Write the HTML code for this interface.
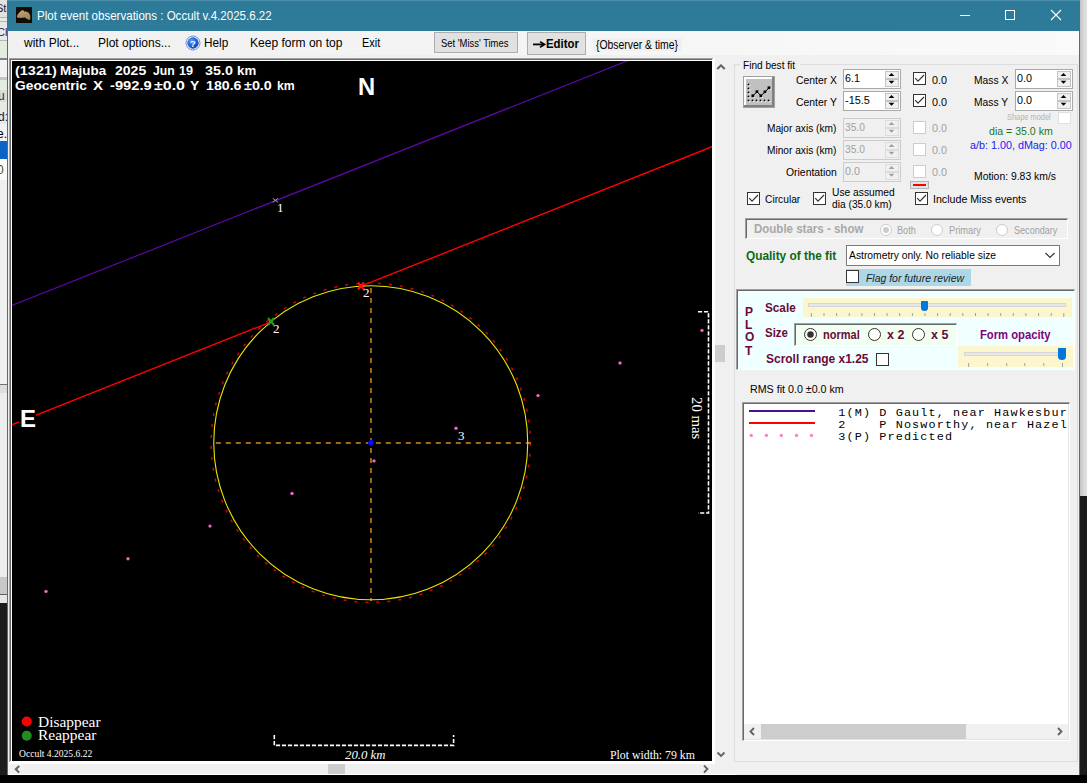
<!DOCTYPE html>
<html><head><meta charset="utf-8"><title>Plot event observations : Occult v.4.2025.6.22</title>
<style>
html,body{margin:0;padding:0;width:1087px;height:783px;overflow:hidden;background:#f0f0f0;font-family:"Liberation Sans",sans-serif}
.b{position:absolute;box-sizing:border-box}
.t{position:absolute;white-space:pre;transform-origin:0 0}
</style></head><body>
<div class="b" style="left:0px;top:0px;width:7px;height:17px;background:#e2e2e2"></div>
<div class="b" style="left:0px;top:17px;width:7px;height:1px;background:#b4b4b4"></div>
<div class="b" style="left:0px;top:18px;width:7px;height:3px;background:#e4eee0"></div>
<div class="b" style="left:0px;top:21px;width:7px;height:1px;background:#b4b4b4"></div>
<div class="b" style="left:0px;top:22px;width:7px;height:18px;background:#e8e8e8"></div>
<div class="b" style="left:0px;top:40px;width:7px;height:1px;background:#b4b4b4"></div>
<div class="b" style="left:0px;top:41px;width:7px;height:17px;background:#e2ede0"></div>
<div class="b" style="left:0px;top:58px;width:7px;height:2px;background:#808080"></div>
<div class="b" style="left:0px;top:60px;width:7px;height:17px;background:#f2f2f2"></div>
<div class="b" style="left:0px;top:77px;width:7px;height:3px;background:#c4c4c4"></div>
<div class="b" style="left:0px;top:80px;width:7px;height:10px;background:#e2ede0"></div>
<div class="b" style="left:0px;top:90px;width:7px;height:12px;background:#dcdcdc"></div>
<div class="b" style="left:0px;top:102px;width:7px;height:5px;background:#e2ede0"></div>
<div class="b" style="left:0px;top:107px;width:7px;height:17px;background:#e8e8e8"></div>
<div class="b" style="left:0px;top:124px;width:7px;height:17px;background:#f2f2f2"></div>
<div class="b" style="left:0px;top:141px;width:7px;height:18px;background:#0a64c8"></div>
<div class="b" style="left:0px;top:159px;width:7px;height:21px;background:#fafafa"></div>
<div class="b" style="left:0px;top:180px;width:7px;height:207px;background:#f0f0f0"></div>
<div class="b" style="left:0px;top:384px;width:7px;height:1px;background:#707078"></div>
<div class="b" style="left:0px;top:385px;width:7px;height:8px;background:#dcdcdc"></div>
<div class="b" style="left:0px;top:393px;width:7px;height:184px;background:#ededed"></div>
<div class="b" style="left:0px;top:577px;width:7px;height:17px;background:#c8c8c8"></div>
<div class="b" style="left:0px;top:594px;width:7px;height:1px;background:#606068"></div>
<div class="b" style="left:0px;top:595px;width:7px;height:8px;background:#e6e6e6"></div>
<div class="b" style="left:0px;top:603px;width:7px;height:180px;background:#1c1c1c"></div>
<div class="b" style="left:1080px;top:0px;width:7px;height:496px;background:linear-gradient(to right,#c2c2c2,#dcdcdc 60%,#e0e0e0)"></div>
<div class="b" style="left:1080px;top:496px;width:7px;height:287px;background:#1b1b1b"></div>
<div class="b" style="left:0px;top:775px;width:1087px;height:8px;background:#000"></div>
<div class="b" style="left:7px;top:0px;width:1073px;height:775px;background:#f0f0f0"></div>
<div class="b" style="left:7px;top:0px;width:1px;height:775px;background:#2d7b99"></div>
<div class="b" style="left:1079px;top:0px;width:1px;height:775px;background:#2d7b99"></div>
<div class="b" style="left:7px;top:0px;width:1073px;height:31px;background:#2d7b99"></div>
<div class="b" style="left:7px;top:0px;width:1073px;height:1px;background:#4a8fab"></div>
<svg class="b" style="left:16px;top:7px" width="16" height="16" viewBox="0 0 16 16"><rect width="16" height="16" fill="#100c06"/><defs><linearGradient id="ag" x1="0" y1="0" x2="0.3" y2="1"><stop offset="0" stop-color="#c8a878"/><stop offset="1" stop-color="#a08058"/></linearGradient></defs><path d="M0.9 9.5 C1.2 7 4 4.5 6.5 2.9 C7.5 3 8 4 8.6 4.7 C9.5 4.3 10.5 4.6 11.4 5.1 C13 5.5 14.5 8 14.4 10.2 C14.3 12 13.8 13 13 12.9 C11 12.5 10 11 8.8 10.6 C7 10.8 4.5 11 2.9 10.8 C1.5 10.7 0.9 10.3 0.9 9.5 Z" fill="url(#ag)"/></svg>
<div class="b" style="left:960px;top:15px;width:10px;height:1px;background:#fff"></div>
<div class="b" style="left:1005px;top:10px;width:10px;height:10px;border:1px solid #fff;box-sizing:border-box"></div>
<svg class="b" style="left:1050px;top:9px" width="12" height="12" viewBox="0 0 12 12"><path d="M1 1 L11 11 M11 1 L1 11" stroke="#fff" stroke-width="1.1"/></svg>
<div class="b" style="left:8px;top:31px;width:1071px;height:24px;background:linear-gradient(to right,#f0f0f0,#fafafa)"></div>
<svg class="b" style="left:185px;top:35px" width="16" height="16" viewBox="0 0 16 16"><defs><radialGradient id="hg" cx="0.35" cy="0.3" r="0.75"><stop offset="0" stop-color="#5aa0ff"/><stop offset="0.6" stop-color="#1f5fe0"/><stop offset="1" stop-color="#1040a8"/></radialGradient></defs><circle cx="8" cy="8" r="7" fill="#fff" stroke="#6a8fd0" stroke-width="1"/><circle cx="8" cy="8" r="5.4" fill="url(#hg)" stroke="#2a58b8" stroke-width="0.6"/><text x="8" y="11.6" text-anchor="middle" font-family="Liberation Sans" font-weight="bold" font-size="9.5" fill="#fff">?</text></svg>
<div class="b" style="left:434px;top:32px;width:84px;height:21px;background:#e1e1e1;border:1px solid #adadad;box-sizing:border-box"></div>
<div class="b" style="left:527px;top:32px;width:59px;height:23px;background:#e1e1e1;border:1px solid #adadad;box-sizing:border-box"></div>
<svg class="b" style="left:532px;top:40px" width="14" height="9"><path d="M1 4.4 L11 4.4" stroke="#000" stroke-width="1.8"/><path d="M8 1.6 L12.6 4.4 L8 7.2" fill="none" stroke="#000" stroke-width="1.6"/></svg>
<div class="b" style="left:593px;top:38px;width:89px;height:13px;background:#f0f0f0"></div>
<div class="b" style="left:9px;top:58px;width:706px;height:706px;background:#fff"></div>
<div class="b" style="left:9px;top:58px;width:704px;height:1px;background:#a0a0a0"></div>
<div class="b" style="left:10px;top:59px;width:702px;height:1px;background:#696969"></div>
<div class="b" style="left:9px;top:58px;width:1px;height:704px;background:#a0a0a0"></div>
<div class="b" style="left:10px;top:59px;width:1px;height:702px;background:#696969"></div>
<div class="b" style="left:12px;top:61px;width:700px;height:700px;background:#000"></div>
<div class="b" style="left:715px;top:58px;width:20px;height:704px;background:#f0f0f0"></div>
<div class="b" style="left:715px;top:345px;width:10px;height:17px;background:#cdcdcd"></div>
<svg class="b" style="left:715px;top:61px" width="12" height="10"><path d="M2.3 8 L6 4.3 L9.7 8" stroke="#606060" stroke-width="2" fill="none"/></svg>
<svg class="b" style="left:715px;top:750px" width="12" height="10"><path d="M2.5 2.5 L6 6 L9.5 2.5" stroke="#606060" stroke-width="1.8" fill="none"/></svg>
<div class="b" style="left:8px;top:764px;width:707px;height:10px;background:#f0f0f0"></div>
<div class="b" style="left:8px;top:774px;width:727px;height:1px;background:#fff"></div>
<div class="b" style="left:328px;top:764px;width:17px;height:10px;background:#cdcdcd"></div>
<svg class="b" style="left:12px;top:764px" width="10" height="10"><path d="M7.2 2 L3.8 5.3 L7.2 8.6" stroke="#606060" stroke-width="2" fill="none"/></svg>
<svg class="b" style="left:701px;top:764px" width="10" height="10"><path d="M3 1.5 L6.5 5 L3 8.5" stroke="#606060" stroke-width="1.8" fill="none"/></svg>
<svg class="b" style="left:12px;top:61px" width="700" height="700" viewBox="12 61 700 700">
<line x1="11.8" y1="305.5" x2="628.7" y2="60.3" stroke="#5a0aa8" stroke-width="1.2"/>
<line x1="11.3" y1="425" x2="271" y2="321.9" stroke="#ff0000" stroke-width="1.4"/>
<line x1="361" y1="286.2" x2="712" y2="146.7" stroke="#ff0000" stroke-width="1.4"/>
<circle cx="370.75" cy="442.8" r="159.6" fill="none" stroke="#e00000" stroke-width="1.4" stroke-dasharray="3 8"/>
<line x1="215.8" y1="443" x2="531" y2="443" stroke="#a06c12" stroke-width="1.9" stroke-dasharray="5 5"/>
<line x1="371" y1="288" x2="371" y2="601" stroke="#a06c12" stroke-width="1.9" stroke-dasharray="5 5"/>
<circle cx="370.75" cy="442.8" r="157.0" fill="none" stroke="#e8e800" stroke-width="1.1"/>
<circle cx="371" cy="442.8" r="2.6" fill="#1010ff" stroke="#0000e0" stroke-width="1"/>
<circle cx="46.0" cy="591.4" r="1.7" fill="#e858b8"/><circle cx="46.0" cy="591.4" r="0.7" fill="#ff90d8"/>
<circle cx="128.0" cy="558.8" r="1.7" fill="#e858b8"/><circle cx="128.0" cy="558.8" r="0.7" fill="#ff90d8"/>
<circle cx="210.0" cy="526.1" r="1.7" fill="#e858b8"/><circle cx="210.0" cy="526.1" r="0.7" fill="#ff90d8"/>
<circle cx="292.0" cy="493.5" r="1.7" fill="#e858b8"/><circle cx="292.0" cy="493.5" r="0.7" fill="#ff90d8"/>
<circle cx="374.0" cy="460.9" r="1.7" fill="#e858b8"/><circle cx="374.0" cy="460.9" r="0.7" fill="#ff90d8"/>
<circle cx="456.0" cy="428.3" r="1.7" fill="#e858b8"/><circle cx="456.0" cy="428.3" r="0.7" fill="#ff90d8"/>
<circle cx="538.0" cy="395.6" r="1.7" fill="#e858b8"/><circle cx="538.0" cy="395.6" r="0.7" fill="#ff90d8"/>
<circle cx="620.0" cy="363.0" r="1.7" fill="#e858b8"/><circle cx="620.0" cy="363.0" r="0.7" fill="#ff90d8"/>
<circle cx="702.0" cy="330.4" r="1.7" fill="#e858b8"/><circle cx="702.0" cy="330.4" r="0.7" fill="#ff90d8"/>
<path d="M272.8 198.3 L278 202.3 M278 198.3 L272.8 202.3" stroke="#a0a0a0" stroke-width="1"/>
<path d="M268 318 L274 325 M274 318 L268 325 M269 321.5 L273 321.5" stroke="#20a020" stroke-width="2"/>
<path d="M358 282.5 L364 289.5 M364 282.5 L358 289.5 M359 286 L363 286" stroke="#ff1010" stroke-width="2"/>
<path d="M274.3 735 L274.3 745.4 L453.6 745.4 L453.6 735" fill="none" stroke="#fff" stroke-width="1.6" stroke-dasharray="4.2 1.8"/>
<path d="M698 311.7 L708.5 311.7 L708.5 513 L698 513" fill="none" stroke="#fff" stroke-width="1.6" stroke-dasharray="4.2 1.8"/>
<circle cx="26.75" cy="721.5" r="5" fill="#ff0000"/>
<circle cx="26.75" cy="735.8" r="5" fill="#228b22"/>
<rect x="19" y="409" width="17" height="19" fill="#000"/>
</svg>
<div class="b" style="left:734px;top:64px;width:344px;height:698px;border:1px solid #dcdcdc"></div>
<div class="b" style="left:740px;top:58px;width:60px;height:12px;background:#f0f0f0"></div>
<svg class="b" style="left:743px;top:76px" width="32" height="32" viewBox="0 0 32 32"><rect x="0" y="0" width="32" height="32" fill="#a0a0a0"/><rect x="1" y="1" width="30" height="30" fill="#808080"/><rect x="1" y="1" width="28" height="28" fill="#fff"/><rect x="3" y="3" width="26" height="26" fill="#c0c0c0"/><circle cx="6.3" cy="9.200000000000001" r="1" fill="#fff"/><circle cx="6.3" cy="13.200000000000001" r="1" fill="#fff"/><circle cx="6.3" cy="17.2" r="1" fill="#fff"/><circle cx="6.3" cy="21.2" r="1" fill="#fff"/><circle cx="6.3" cy="25.2" r="1" fill="#fff"/><circle cx="10.3" cy="25.2" r="1" fill="#fff"/><circle cx="14.3" cy="25.2" r="1" fill="#fff"/><circle cx="18.3" cy="25.2" r="1" fill="#fff"/><circle cx="22.3" cy="25.2" r="1" fill="#fff"/><circle cx="26.400000000000002" cy="25.2" r="1" fill="#fff"/><circle cx="5.5" cy="8.4" r="0.95" fill="#000"/><circle cx="5.5" cy="12.4" r="0.95" fill="#000"/><circle cx="5.5" cy="16.4" r="0.95" fill="#000"/><circle cx="5.5" cy="20.4" r="0.95" fill="#000"/><circle cx="5.5" cy="24.4" r="0.95" fill="#000"/><circle cx="9.5" cy="24.4" r="0.95" fill="#000"/><circle cx="13.5" cy="24.4" r="0.95" fill="#000"/><circle cx="17.5" cy="24.4" r="0.95" fill="#000"/><circle cx="21.5" cy="24.4" r="0.95" fill="#000"/><circle cx="25.6" cy="24.4" r="0.95" fill="#000"/><rect x="9.4" y="19.3" width="2.6" height="2.6" fill="#fff"/><rect x="13.5" y="15.2" width="2.6" height="2.6" fill="#fff"/><rect x="17.4" y="19.3" width="2.6" height="2.6" fill="#fff"/><rect x="21.5" y="15.4" width="2.6" height="2.6" fill="#fff"/><rect x="25.5" y="11.3" width="2.6" height="2.6" fill="#fff"/><path d="M9.9 19.8 L14 15.7 L17.9 19.8 L22 15.9 L26 11.8" fill="none" stroke="#000" stroke-width="1"/><rect x="8.5" y="18.400000000000002" width="2.8" height="2.8" fill="#000"/><rect x="12.6" y="14.299999999999999" width="2.8" height="2.8" fill="#000"/><rect x="16.5" y="18.400000000000002" width="2.8" height="2.8" fill="#000"/><rect x="20.6" y="14.5" width="2.8" height="2.8" fill="#000"/><rect x="24.6" y="10.4" width="2.8" height="2.8" fill="#000"/></svg>
<div class="b" style="left:843px;top:69px;width:58px;height:20px;background:#ffffff;border:1px solid #a9a9a9"></div>
<svg class="b" style="left:885px;top:69px" width="14" height="20" viewBox="0 0 14 20"><rect x="0" y="2" width="14" height="16" fill="#f0f0f0"/><rect x="0.5" y="2.5" width="13" height="15" fill="none" stroke="#c4c4c4" stroke-width="1"/><rect x="0.5" y="9.0" width="13" height="2" fill="#c4c4c4"/><path d="M3.6 7 L6.5 4 L9.4 7 Z" fill="#000"/><path d="M3.6 11.8 L6.5 14.8 L9.4 11.8 Z" fill="#000"/></svg>
<div class="b" style="left:843px;top:91px;width:58px;height:20px;background:#ffffff;border:1px solid #a9a9a9"></div>
<svg class="b" style="left:885px;top:91px" width="14" height="20" viewBox="0 0 14 20"><rect x="0" y="2" width="14" height="16" fill="#f0f0f0"/><rect x="0.5" y="2.5" width="13" height="15" fill="none" stroke="#c4c4c4" stroke-width="1"/><rect x="0.5" y="9.0" width="13" height="2" fill="#c4c4c4"/><path d="M3.6 7 L6.5 4 L9.4 7 Z" fill="#000"/><path d="M3.6 11.8 L6.5 14.8 L9.4 11.8 Z" fill="#000"/></svg>
<svg class="b" style="left:913px;top:72px" width="13" height="13" viewBox="0 0 13 13"><rect x="0.5" y="0.5" width="12" height="12" fill="#fff" stroke="#333333" stroke-width="1"/><path d="M2.2 6.2 L5 9.2 L11 3" fill="none" stroke="#333" stroke-width="1.2"/></svg>
<svg class="b" style="left:913px;top:94px" width="13" height="13" viewBox="0 0 13 13"><rect x="0.5" y="0.5" width="12" height="12" fill="#fff" stroke="#333333" stroke-width="1"/><path d="M2.2 6.2 L5 9.2 L11 3" fill="none" stroke="#333" stroke-width="1.2"/></svg>
<div class="b" style="left:843px;top:118px;width:58px;height:20px;background:#f0f0f0;border:1px solid #cccccc"></div>
<svg class="b" style="left:885px;top:118px" width="14" height="20" viewBox="0 0 14 20"><rect x="0" y="2" width="14" height="16" fill="#f0f0f0"/><rect x="0.5" y="2.5" width="13" height="15" fill="none" stroke="#dcdcdc" stroke-width="1"/><rect x="0.5" y="9.0" width="13" height="2" fill="#dcdcdc"/><path d="M3.6 7 L6.5 4 L9.4 7 Z" fill="#a0a0a0"/><path d="M3.6 11.8 L6.5 14.8 L9.4 11.8 Z" fill="#a0a0a0"/></svg>
<div class="b" style="left:843px;top:140px;width:58px;height:20px;background:#f0f0f0;border:1px solid #cccccc"></div>
<svg class="b" style="left:885px;top:140px" width="14" height="20" viewBox="0 0 14 20"><rect x="0" y="2" width="14" height="16" fill="#f0f0f0"/><rect x="0.5" y="2.5" width="13" height="15" fill="none" stroke="#dcdcdc" stroke-width="1"/><rect x="0.5" y="9.0" width="13" height="2" fill="#dcdcdc"/><path d="M3.6 7 L6.5 4 L9.4 7 Z" fill="#a0a0a0"/><path d="M3.6 11.8 L6.5 14.8 L9.4 11.8 Z" fill="#a0a0a0"/></svg>
<div class="b" style="left:843px;top:162px;width:58px;height:20px;background:#f0f0f0;border:1px solid #cccccc"></div>
<svg class="b" style="left:885px;top:162px" width="14" height="20" viewBox="0 0 14 20"><rect x="0" y="2" width="14" height="16" fill="#f0f0f0"/><rect x="0.5" y="2.5" width="13" height="15" fill="none" stroke="#dcdcdc" stroke-width="1"/><rect x="0.5" y="9.0" width="13" height="2" fill="#dcdcdc"/><path d="M3.6 7 L6.5 4 L9.4 7 Z" fill="#a0a0a0"/><path d="M3.6 11.8 L6.5 14.8 L9.4 11.8 Z" fill="#a0a0a0"/></svg>
<svg class="b" style="left:913px;top:121px" width="13" height="13" viewBox="0 0 13 13"><rect x="0.5" y="0.5" width="12" height="12" fill="#fff" stroke="#cccccc" stroke-width="1"/></svg>
<svg class="b" style="left:913px;top:143px" width="13" height="13" viewBox="0 0 13 13"><rect x="0.5" y="0.5" width="12" height="12" fill="#fff" stroke="#cccccc" stroke-width="1"/></svg>
<svg class="b" style="left:913px;top:165px" width="13" height="13" viewBox="0 0 13 13"><rect x="0.5" y="0.5" width="12" height="12" fill="#fff" stroke="#cccccc" stroke-width="1"/></svg>
<div class="b" style="left:910px;top:181px;width:19px;height:8px;background:#e4e4e4;border:1px solid #b4b4b4"></div>
<div class="b" style="left:913px;top:184px;width:13px;height:2px;background:#ff0000"></div>
<svg class="b" style="left:747px;top:192px" width="13" height="13" viewBox="0 0 13 13"><rect x="0.5" y="0.5" width="12" height="12" fill="#fff" stroke="#333333" stroke-width="1"/><path d="M2.2 6.2 L5 9.2 L11 3" fill="none" stroke="#333" stroke-width="1.2"/></svg>
<svg class="b" style="left:813px;top:192px" width="13" height="13" viewBox="0 0 13 13"><rect x="0.5" y="0.5" width="12" height="12" fill="#fff" stroke="#333333" stroke-width="1"/><path d="M2.2 6.2 L5 9.2 L11 3" fill="none" stroke="#333" stroke-width="1.2"/></svg>
<svg class="b" style="left:915px;top:192px" width="13" height="13" viewBox="0 0 13 13"><rect x="0.5" y="0.5" width="12" height="12" fill="#fff" stroke="#333333" stroke-width="1"/><path d="M2.2 6.2 L5 9.2 L11 3" fill="none" stroke="#333" stroke-width="1.2"/></svg>
<div class="b" style="left:1015px;top:69px;width:58px;height:20px;background:#ffffff;border:1px solid #a9a9a9"></div>
<svg class="b" style="left:1057px;top:69px" width="14" height="20" viewBox="0 0 14 20"><rect x="0" y="2" width="14" height="16" fill="#f0f0f0"/><rect x="0.5" y="2.5" width="13" height="15" fill="none" stroke="#c4c4c4" stroke-width="1"/><rect x="0.5" y="9.0" width="13" height="2" fill="#c4c4c4"/><path d="M3.6 7 L6.5 4 L9.4 7 Z" fill="#000"/><path d="M3.6 11.8 L6.5 14.8 L9.4 11.8 Z" fill="#000"/></svg>
<div class="b" style="left:1015px;top:91px;width:58px;height:20px;background:#ffffff;border:1px solid #a9a9a9"></div>
<svg class="b" style="left:1057px;top:91px" width="14" height="20" viewBox="0 0 14 20"><rect x="0" y="2" width="14" height="16" fill="#f0f0f0"/><rect x="0.5" y="2.5" width="13" height="15" fill="none" stroke="#c4c4c4" stroke-width="1"/><rect x="0.5" y="9.0" width="13" height="2" fill="#c4c4c4"/><path d="M3.6 7 L6.5 4 L9.4 7 Z" fill="#000"/><path d="M3.6 11.8 L6.5 14.8 L9.4 11.8 Z" fill="#000"/></svg>
<div class="b" style="left:1058px;top:112px;width:13px;height:12px;background:#fff;border:1px solid #e0e0e0"></div>
<div class="b" style="left:745px;top:218px;width:323px;height:21px;background:#f0f0f0;border-top:2px solid #a0a0a0;border-left:2px solid #a0a0a0;border-bottom:1px solid #fff;border-right:1px solid #fff"></div>
<div class="b" style="left:746px;top:219px;width:321px;height:1px;background:#696969"></div>
<div class="b" style="left:746px;top:219px;width:1px;height:19px;background:#696969"></div>
<svg class="b" style="left:878.5px;top:222.8px" width="14" height="14"><circle cx="7" cy="7" r="5.5" fill="#fff" stroke="#cccccc" stroke-width="1"/><circle cx="7" cy="7" r="3.0" fill="#cccccc"/></svg>
<svg class="b" style="left:930.2px;top:222.8px" width="14" height="14"><circle cx="7" cy="7" r="5.5" fill="#fff" stroke="#cccccc" stroke-width="1"/></svg>
<svg class="b" style="left:995.4px;top:222.8px" width="14" height="14"><circle cx="7" cy="7" r="5.5" fill="#fff" stroke="#cccccc" stroke-width="1"/></svg>
<div class="b" style="left:846px;top:245px;width:214px;height:21px;background:#fff;border:1px solid #7a7a7a"></div>
<svg class="b" style="left:1044px;top:251px" width="12" height="9"><path d="M1.5 2 L6 6.5 L10.5 2" fill="none" stroke="#333" stroke-width="1.2"/></svg>
<div class="b" style="left:846px;top:269px;width:125px;height:17px;background:#acd7e6"></div>
<svg class="b" style="left:846px;top:270px" width="13" height="13" viewBox="0 0 13 13"><rect x="0.5" y="0.5" width="12" height="12" fill="#fff" stroke="#333333" stroke-width="1"/></svg>
<div class="b" style="left:736px;top:289px;width:339px;height:81px;background:#f0ffff;border-top:2px solid #a0a0a0;border-left:2px solid #a0a0a0;border-bottom:1px solid #fff;border-right:1px solid #fff"></div>
<div class="b" style="left:737px;top:290px;width:337px;height:1px;background:#696969"></div>
<div class="b" style="left:737px;top:290px;width:1px;height:79px;background:#696969"></div>
<div class="b" style="left:803px;top:298px;width:269px;height:19px;background:#fcf6cf"></div>
<div class="b" style="left:808px;top:303px;width:258px;height:4px;background:#e7e7e7;border:1px solid #d6d6d6"></div>
<svg class="b" style="left:920px;top:300px" width="9" height="12"><path d="M1 1.5 Q1 1 1.5 1 L7.5 1 Q8 1 8 1.5 L8 8 Q8 11 4.5 11 Q1 11 1 8 Z" fill="#0078d7"/></svg>
<svg class="b" style="left:0;top:0" width="1087" height="783" viewBox="0 0 1087 783" ><line x1="811.4" y1="313" x2="811.4" y2="317" stroke="#a0a0a0" stroke-width="1"/><line x1="824.0" y1="313" x2="824.0" y2="316" stroke="#a0a0a0" stroke-width="1"/><line x1="836.6" y1="313" x2="836.6" y2="316" stroke="#a0a0a0" stroke-width="1"/><line x1="849.3" y1="313" x2="849.3" y2="316" stroke="#a0a0a0" stroke-width="1"/><line x1="861.9" y1="313" x2="861.9" y2="316" stroke="#a0a0a0" stroke-width="1"/><line x1="874.5" y1="313" x2="874.5" y2="316" stroke="#a0a0a0" stroke-width="1"/><line x1="887.1" y1="313" x2="887.1" y2="316" stroke="#a0a0a0" stroke-width="1"/><line x1="899.7" y1="313" x2="899.7" y2="316" stroke="#a0a0a0" stroke-width="1"/><line x1="912.4" y1="313" x2="912.4" y2="316" stroke="#a0a0a0" stroke-width="1"/><line x1="925.0" y1="313" x2="925.0" y2="316" stroke="#a0a0a0" stroke-width="1"/><line x1="937.6" y1="313" x2="937.6" y2="316" stroke="#a0a0a0" stroke-width="1"/><line x1="950.2" y1="313" x2="950.2" y2="316" stroke="#a0a0a0" stroke-width="1"/><line x1="962.8" y1="313" x2="962.8" y2="316" stroke="#a0a0a0" stroke-width="1"/><line x1="975.5" y1="313" x2="975.5" y2="316" stroke="#a0a0a0" stroke-width="1"/><line x1="988.1" y1="313" x2="988.1" y2="316" stroke="#a0a0a0" stroke-width="1"/><line x1="1000.7" y1="313" x2="1000.7" y2="316" stroke="#a0a0a0" stroke-width="1"/><line x1="1013.3" y1="313" x2="1013.3" y2="316" stroke="#a0a0a0" stroke-width="1"/><line x1="1025.9" y1="313" x2="1025.9" y2="316" stroke="#a0a0a0" stroke-width="1"/><line x1="1038.6" y1="313" x2="1038.6" y2="316" stroke="#a0a0a0" stroke-width="1"/><line x1="1051.2" y1="313" x2="1051.2" y2="316" stroke="#a0a0a0" stroke-width="1"/><line x1="1063.8" y1="313" x2="1063.8" y2="317" stroke="#a0a0a0" stroke-width="1"/></svg>
<div class="b" style="left:794px;top:323px;width:163px;height:23px;background:#f0fff0;border-top:2px solid #a0a0a0;border-left:2px solid #a0a0a0;border-bottom:1px solid #fff;border-right:1px solid #fff"></div>
<div class="b" style="left:795px;top:324px;width:161px;height:1px;background:#696969"></div>
<div class="b" style="left:795px;top:324px;width:1px;height:21px;background:#696969"></div>
<svg class="b" style="left:803.0px;top:327.0px" width="15.0" height="15.0"><circle cx="7.5" cy="7.5" r="6.0" fill="#fff" stroke="#333" stroke-width="1"/><circle cx="7.5" cy="7.5" r="3.25" fill="#333"/></svg>
<svg class="b" style="left:866.7px;top:327.0px" width="15.0" height="15.0"><circle cx="7.5" cy="7.5" r="6.0" fill="#fff" stroke="#333" stroke-width="1"/></svg>
<svg class="b" style="left:911.0px;top:327.0px" width="15.0" height="15.0"><circle cx="7.5" cy="7.5" r="6.0" fill="#fff" stroke="#333" stroke-width="1"/></svg>
<svg class="b" style="left:876px;top:353px" width="13" height="13" viewBox="0 0 13 13"><rect x="0.5" y="0.5" width="12" height="12" fill="#fff" stroke="#333333" stroke-width="1"/></svg>
<div class="b" style="left:958px;top:346px;width:115px;height:21px;background:#fcf6cf"></div>
<div class="b" style="left:964px;top:352px;width:102px;height:4px;background:#e7e7e7;border:1px solid #d6d6d6"></div>
<svg class="b" style="left:1057px;top:347px" width="10" height="14"><path d="M1 1.5 Q1 1 1.5 1 L8.5 1 Q9 1 9 1.5 L9 9.5 Q9 13 5 13 Q1 13 1 9.5 Z" fill="#0078d7"/></svg>
<svg class="b" style="left:0;top:0" width="1087" height="783" viewBox="0 0 1087 783"><line x1="968.6" y1="363" x2="968.6" y2="367" stroke="#a0a0a0" stroke-width="1"/><line x1="987.6" y1="363" x2="987.6" y2="366" stroke="#a0a0a0" stroke-width="1"/><line x1="1006.7" y1="363" x2="1006.7" y2="366" stroke="#a0a0a0" stroke-width="1"/><line x1="1024.8" y1="363" x2="1024.8" y2="366" stroke="#a0a0a0" stroke-width="1"/><line x1="1043.8" y1="363" x2="1043.8" y2="366" stroke="#a0a0a0" stroke-width="1"/><line x1="1062.5" y1="363" x2="1062.5" y2="367" stroke="#a0a0a0" stroke-width="1"/></svg>
<div class="b" style="left:742px;top:402px;width:328px;height:339px;background:#ffffff;border-top:2px solid #a0a0a0;border-left:2px solid #a0a0a0;border-bottom:1px solid #fff;border-right:1px solid #fff"></div>
<div class="b" style="left:743px;top:403px;width:326px;height:1px;background:#696969"></div>
<div class="b" style="left:743px;top:403px;width:1px;height:337px;background:#696969"></div>
<div class="b" style="left:1068px;top:404px;width:1px;height:336px;background:#e3e3e3"></div>
<div class="b" style="left:744px;top:739px;width:325px;height:1px;background:#e3e3e3"></div>
<div class="b" style="left:749px;top:410px;width:66px;height:2px;background:#4b0f8c"></div>
<div class="b" style="left:749px;top:422px;width:66px;height:2px;background:#ff0000"></div>
<svg class="b" style="left:0;top:0" width="1087" height="783" viewBox="0 0 1087 783"><circle cx="751.2" cy="435.4" r="1.7" fill="#ff80c8"/><circle cx="766.4" cy="435.4" r="1.7" fill="#ff80c8"/><circle cx="781.3" cy="435.4" r="1.7" fill="#ff80c8"/><circle cx="796.5" cy="435.4" r="1.7" fill="#ff80c8"/><circle cx="811.4" cy="435.4" r="1.7" fill="#ff80c8"/></svg>
<div class="b" style="left:744px;top:724px;width:324px;height:15px;background:#f0f0f0"></div>
<div class="b" style="left:761px;top:724px;width:205px;height:15px;background:#cdcdcd"></div>
<svg class="b" style="left:746px;top:726px" width="12" height="11"><path d="M8 2 L4.5 5.5 L8 9" fill="none" stroke="#606060" stroke-width="1.8"/></svg>
<svg class="b" style="left:1054px;top:726px" width="12" height="11"><path d="M4 2 L7.5 5.5 L4 9" fill="none" stroke="#606060" stroke-width="1.8"/></svg>
<div class="b" style="left:0px;top:0px;width:7px;height:17px;overflow:hidden"><div class="t" style="left:-4.00px;top:1.30px;font-family:'Liberation Sans',sans-serif;font-size:11px;line-height:14px;font-weight:normal;font-style:normal;color:#1a1a3a;">Sto</div></div>
<div class="b" style="left:0px;top:22px;width:7px;height:18px;overflow:hidden"><div class="t" style="left:-3.00px;top:3.00px;font-family:'Liberation Sans',sans-serif;font-size:11px;line-height:14px;font-weight:normal;font-style:normal;color:#3a1a1a;">Cle</div></div>
<div class="b" style="left:0px;top:89px;width:7px;height:13px;overflow:hidden"><div class="t" style="left:-2.00px;top:0.00px;font-family:'Liberation Sans',sans-serif;font-size:12px;line-height:15px;font-weight:normal;font-style:normal;color:#3a2a10;">u</div></div>
<div class="b" style="left:0px;top:107px;width:7px;height:17px;overflow:hidden"><div class="t" style="left:-2.00px;top:3.00px;font-family:'Liberation Sans',sans-serif;font-size:12px;line-height:15px;font-weight:normal;font-style:normal;color:#1a1a3a;">d:</div></div>
<div class="b" style="left:0px;top:124px;width:7px;height:17px;overflow:hidden"><div class="t" style="left:-3.00px;top:3.00px;font-family:'Liberation Sans',sans-serif;font-size:12px;line-height:15px;font-weight:normal;font-style:normal;color:#000;">e.</div></div>
<div class="b" style="left:0px;top:159px;width:7px;height:21px;overflow:hidden"><div class="t" style="left:-3.00px;top:4.00px;font-family:'Liberation Sans',sans-serif;font-size:12px;line-height:15px;font-weight:normal;font-style:normal;color:#5a4a00;">0</div></div>
<div class="t" style="left:37.00px;top:9.00px;font-family:'Liberation Sans',sans-serif;font-size:12px;line-height:15px;font-weight:normal;font-style:normal;color:#fff;transform:scaleX(0.9621);">Plot event observations : Occult v.4.2025.6.22</div>
<div class="t" style="left:23.80px;top:36.20px;font-family:'Liberation Sans',sans-serif;font-size:12px;line-height:15px;font-weight:normal;font-style:normal;color:#000;transform:scaleX(0.9997);">with Plot...</div>
<div class="t" style="left:98.30px;top:36.20px;font-family:'Liberation Sans',sans-serif;font-size:12px;line-height:15px;font-weight:normal;font-style:normal;color:#000;transform:scaleX(1.0003);">Plot options...</div>
<div class="t" style="left:204.00px;top:36.20px;font-family:'Liberation Sans',sans-serif;font-size:12px;line-height:15px;font-weight:normal;font-style:normal;color:#000;transform:scaleX(0.9798);">Help</div>
<div class="t" style="left:249.90px;top:36.20px;font-family:'Liberation Sans',sans-serif;font-size:12px;line-height:15px;font-weight:normal;font-style:normal;color:#000;transform:scaleX(1.0034);">Keep form on top</div>
<div class="t" style="left:362.00px;top:36.20px;font-family:'Liberation Sans',sans-serif;font-size:12px;line-height:15px;font-weight:normal;font-style:normal;color:#000;transform:scaleX(0.9095);">Exit</div>
<div class="t" style="left:440.80px;top:35.70px;font-family:'Liberation Sans',sans-serif;font-size:11px;line-height:14px;font-weight:normal;font-style:normal;color:#000;transform:scaleX(0.8557);">Set 'Miss' Times</div>
<div class="t" style="left:545.60px;top:36.80px;font-family:'Liberation Sans',sans-serif;font-size:12px;line-height:15px;font-weight:bold;font-style:normal;color:#000;transform:scaleX(0.9487);">Editor</div>
<div class="t" style="left:596.00px;top:37.50px;font-family:'Liberation Sans',sans-serif;font-size:12px;line-height:15px;font-weight:normal;font-style:normal;color:#000;transform:scaleX(0.8659);">{Observer &amp; time}</div>
<div class="t" style="left:15.40px;top:62.50px;font-family:'Liberation Sans',sans-serif;font-size:13px;line-height:16px;font-weight:bold;font-style:normal;color:#fff;transform:scaleX(1.1114);">(1321)</div>
<div class="t" style="left:60.30px;top:62.50px;font-family:'Liberation Sans',sans-serif;font-size:13px;line-height:16px;font-weight:bold;font-style:normal;color:#fff;transform:scaleX(1.0296);">Majuba</div>
<div class="t" style="left:114.80px;top:62.50px;font-family:'Liberation Sans',sans-serif;font-size:13px;line-height:16px;font-weight:bold;font-style:normal;color:#fff;transform:scaleX(1.0805);">2025</div>
<div class="t" style="left:152.70px;top:62.50px;font-family:'Liberation Sans',sans-serif;font-size:13px;line-height:16px;font-weight:bold;font-style:normal;color:#fff;transform:scaleX(0.9408);">Jun</div>
<div class="t" style="left:179.30px;top:62.50px;font-family:'Liberation Sans',sans-serif;font-size:13px;line-height:16px;font-weight:bold;font-style:normal;color:#fff;transform:scaleX(0.9698);">19</div>
<div class="t" style="left:204.80px;top:62.50px;font-family:'Liberation Sans',sans-serif;font-size:13px;line-height:16px;font-weight:bold;font-style:normal;color:#fff;transform:scaleX(1.1008);">35.0</div>
<div class="t" style="left:237.30px;top:62.50px;font-family:'Liberation Sans',sans-serif;font-size:13px;line-height:16px;font-weight:bold;font-style:normal;color:#fff;transform:scaleX(1.0203);">km</div>
<div class="t" style="left:15.40px;top:78.40px;font-family:'Liberation Sans',sans-serif;font-size:13px;line-height:16px;font-weight:bold;font-style:normal;color:#fff;transform:scaleX(1.0608);">Geocentric</div>
<div class="t" style="left:93.40px;top:78.40px;font-family:'Liberation Sans',sans-serif;font-size:13px;line-height:16px;font-weight:bold;font-style:normal;color:#fff;transform:scaleX(1.1556);">X</div>
<div class="t" style="left:110.00px;top:78.40px;font-family:'Liberation Sans',sans-serif;font-size:13px;line-height:16px;font-weight:bold;font-style:normal;color:#fff;transform:scaleX(1.1302);">-992.9</div>
<div class="t" style="left:154.10px;top:78.40px;font-family:'Liberation Sans',sans-serif;font-size:13px;line-height:16px;font-weight:bold;font-style:normal;color:#fff;transform:scaleX(1.2292);">±0.0</div>
<div class="t" style="left:190.40px;top:78.40px;font-family:'Liberation Sans',sans-serif;font-size:13px;line-height:16px;font-weight:bold;font-style:normal;color:#fff;transform:scaleX(1.0667);">Y</div>
<div class="t" style="left:205.50px;top:78.40px;font-family:'Liberation Sans',sans-serif;font-size:13px;line-height:16px;font-weight:bold;font-style:normal;color:#fff;transform:scaleX(1.0897);">180.6</div>
<div class="t" style="left:244.20px;top:78.40px;font-family:'Liberation Sans',sans-serif;font-size:13px;line-height:16px;font-weight:bold;font-style:normal;color:#fff;transform:scaleX(1.1050);">±0.0</div>
<div class="t" style="left:276.60px;top:78.40px;font-family:'Liberation Sans',sans-serif;font-size:13px;line-height:16px;font-weight:bold;font-style:normal;color:#fff;transform:scaleX(0.9435);">km</div>
<div class="t" style="left:358.37px;top:73.00px;font-family:'Liberation Sans',sans-serif;font-size:23px;line-height:28px;font-weight:bold;font-style:normal;color:#fff;transform:scaleX(1.0333);">N</div>
<div class="t" style="left:20.46px;top:404.80px;font-family:'Liberation Sans',sans-serif;font-size:23px;line-height:28px;font-weight:bold;font-style:normal;color:#fff;transform:scaleX(1.0429);">E</div>
<div class="t" style="left:277.00px;top:199.80px;font-family:'Liberation Serif',serif;font-size:13px;line-height:16px;font-weight:normal;font-style:normal;color:#fff;">1</div>
<div class="t" style="left:363.00px;top:284.80px;font-family:'Liberation Serif',serif;font-size:13px;line-height:16px;font-weight:normal;font-style:normal;color:#fff;">2</div>
<div class="t" style="left:273.10px;top:320.80px;font-family:'Liberation Serif',serif;font-size:13px;line-height:16px;font-weight:normal;font-style:normal;color:#fff;">2</div>
<div class="t" style="left:457.90px;top:428.00px;font-family:'Liberation Serif',serif;font-size:13px;line-height:16px;font-weight:normal;font-style:normal;color:#fff;">3</div>
<div class="t" style="left:38.20px;top:712.90px;font-family:'Liberation Serif',serif;font-size:15px;line-height:18px;font-weight:normal;font-style:normal;color:#fff;transform:scaleX(1.0294);">Disappear</div>
<div class="t" style="left:38.20px;top:726.40px;font-family:'Liberation Serif',serif;font-size:15px;line-height:18px;font-weight:normal;font-style:normal;color:#fff;transform:scaleX(1.0312);">Reappear</div>
<div class="t" style="left:19.20px;top:745.70px;font-family:'Liberation Serif',serif;font-size:11px;line-height:14px;font-weight:normal;font-style:normal;color:#fff;transform:scaleX(0.8685);">Occult 4.2025.6.22</div>
<div class="t" style="left:609.80px;top:746.90px;font-family:'Liberation Serif',serif;font-size:13px;line-height:16px;font-weight:normal;font-style:normal;color:#fff;transform:scaleX(0.9077);">Plot width: 79 km</div>
<div class="t" style="left:345.30px;top:746.80px;font-family:'Liberation Serif',serif;font-size:13px;line-height:16px;font-weight:normal;font-style:italic;color:#fff;transform:scaleX(0.9811);">20.0 km</div>
<div class="t" style="left:706.40px;top:396.70px;font-family:'Liberation Serif',serif;font-size:15px;line-height:18px;font-weight:normal;font-style:normal;color:#fff;transform:rotate(90deg) scaleX(0.9866);">20 mas</div>
<div class="t" style="left:743.20px;top:57.80px;font-family:'Liberation Sans',sans-serif;font-size:11.5px;line-height:14px;font-weight:normal;font-style:normal;color:#000;transform:scaleX(0.8764);">Find best fit</div>
<div class="t" style="left:795.70px;top:72.50px;font-family:'Liberation Sans',sans-serif;font-size:11.5px;line-height:14px;font-weight:normal;font-style:normal;color:#000;transform:scaleX(0.9035);">Center X</div>
<div class="t" style="left:795.70px;top:94.50px;font-family:'Liberation Sans',sans-serif;font-size:11.5px;line-height:14px;font-weight:normal;font-style:normal;color:#000;transform:scaleX(0.9035);">Center Y</div>
<div class="t" style="left:845.00px;top:71.30px;font-family:'Liberation Sans',sans-serif;font-size:11.5px;line-height:14px;font-weight:normal;font-style:normal;color:#000;transform:scaleX(0.9300);">6.1</div>
<div class="t" style="left:845.00px;top:93.30px;font-family:'Liberation Sans',sans-serif;font-size:11.5px;line-height:14px;font-weight:normal;font-style:normal;color:#000;transform:scaleX(0.9490);">-15.5</div>
<div class="t" style="left:932.00px;top:72.50px;font-family:'Liberation Sans',sans-serif;font-size:11.5px;line-height:14px;font-weight:normal;font-style:normal;color:#000;transform:scaleX(0.9364);">0.0</div>
<div class="t" style="left:932.00px;top:94.50px;font-family:'Liberation Sans',sans-serif;font-size:11.5px;line-height:14px;font-weight:normal;font-style:normal;color:#000;transform:scaleX(0.9364);">0.0</div>
<div class="t" style="left:767.30px;top:121.20px;font-family:'Liberation Sans',sans-serif;font-size:11.5px;line-height:14px;font-weight:normal;font-style:normal;color:#000;transform:scaleX(0.8825);">Major axis (km)</div>
<div class="t" style="left:767.30px;top:143.20px;font-family:'Liberation Sans',sans-serif;font-size:11.5px;line-height:14px;font-weight:normal;font-style:normal;color:#000;transform:scaleX(0.8825);">Minor axis (km)</div>
<div class="t" style="left:785.50px;top:165.20px;font-family:'Liberation Sans',sans-serif;font-size:11.5px;line-height:14px;font-weight:normal;font-style:normal;color:#000;transform:scaleX(0.9041);">Orientation</div>
<div class="t" style="left:845.00px;top:120.00px;font-family:'Liberation Sans',sans-serif;font-size:11.5px;line-height:14px;font-weight:normal;font-style:normal;color:#a0a0a0;transform:scaleX(0.8869);">35.0</div>
<div class="t" style="left:845.00px;top:142.00px;font-family:'Liberation Sans',sans-serif;font-size:11.5px;line-height:14px;font-weight:normal;font-style:normal;color:#a0a0a0;transform:scaleX(0.8869);">35.0</div>
<div class="t" style="left:845.00px;top:164.00px;font-family:'Liberation Sans',sans-serif;font-size:11.5px;line-height:14px;font-weight:normal;font-style:normal;color:#a0a0a0;transform:scaleX(0.9364);">0.0</div>
<div class="t" style="left:932.00px;top:121.20px;font-family:'Liberation Sans',sans-serif;font-size:11.5px;line-height:14px;font-weight:normal;font-style:normal;color:#a0a0a0;transform:scaleX(0.9364);">0.0</div>
<div class="t" style="left:932.00px;top:143.20px;font-family:'Liberation Sans',sans-serif;font-size:11.5px;line-height:14px;font-weight:normal;font-style:normal;color:#a0a0a0;transform:scaleX(0.9364);">0.0</div>
<div class="t" style="left:932.00px;top:165.20px;font-family:'Liberation Sans',sans-serif;font-size:11.5px;line-height:14px;font-weight:normal;font-style:normal;color:#a0a0a0;transform:scaleX(0.9364);">0.0</div>
<div class="t" style="left:765.30px;top:191.70px;font-family:'Liberation Sans',sans-serif;font-size:11.5px;line-height:14px;font-weight:normal;font-style:normal;color:#000;transform:scaleX(0.8898);">Circular</div>
<div class="t" style="left:832.00px;top:184.60px;font-family:'Liberation Sans',sans-serif;font-size:11.5px;line-height:14px;font-weight:normal;font-style:normal;color:#000;transform:scaleX(0.8911);">Use assumed</div>
<div class="t" style="left:832.00px;top:196.50px;font-family:'Liberation Sans',sans-serif;font-size:11.5px;line-height:14px;font-weight:normal;font-style:normal;color:#000;transform:scaleX(0.8888);">dia (35.0 km)</div>
<div class="t" style="left:933.48px;top:191.50px;font-family:'Liberation Sans',sans-serif;font-size:11.5px;line-height:14px;font-weight:normal;font-style:normal;color:#000;transform:scaleX(0.9248);">Include Miss events</div>
<div class="t" style="left:974.40px;top:73.30px;font-family:'Liberation Sans',sans-serif;font-size:11.5px;line-height:14px;font-weight:normal;font-style:normal;color:#000;transform:scaleX(0.8947);">Mass X</div>
<div class="t" style="left:974.40px;top:95.30px;font-family:'Liberation Sans',sans-serif;font-size:11.5px;line-height:14px;font-weight:normal;font-style:normal;color:#000;transform:scaleX(0.8947);">Mass Y</div>
<div class="t" style="left:1017.00px;top:71.30px;font-family:'Liberation Sans',sans-serif;font-size:11.5px;line-height:14px;font-weight:normal;font-style:normal;color:#000;transform:scaleX(0.9364);">0.0</div>
<div class="t" style="left:1017.00px;top:93.30px;font-family:'Liberation Sans',sans-serif;font-size:11.5px;line-height:14px;font-weight:normal;font-style:normal;color:#000;transform:scaleX(0.9364);">0.0</div>
<div class="t" style="left:1007.00px;top:111.50px;font-family:'Liberation Sans',sans-serif;font-size:9px;line-height:11px;font-weight:normal;font-style:normal;color:#b4b4b4;transform:scaleX(0.8239);">Shape model</div>
<div class="t" style="left:988.80px;top:124.20px;font-family:'Liberation Sans',sans-serif;font-size:11.5px;line-height:14px;font-weight:normal;font-style:normal;color:#1a7a1a;transform:scaleX(0.9189);">dia = 35.0 km</div>
<div class="t" style="left:970.00px;top:138.20px;font-family:'Liberation Sans',sans-serif;font-size:11.5px;line-height:14px;font-weight:normal;font-style:normal;color:#2020f0;transform:scaleX(0.9364);">a/b: 1.00, dMag: 0.00</div>
<div class="t" style="left:974.40px;top:169.40px;font-family:'Liberation Sans',sans-serif;font-size:11.5px;line-height:14px;font-weight:normal;font-style:normal;color:#000;transform:scaleX(0.9032);">Motion: 9.83 km/s</div>
<div class="t" style="left:754.00px;top:221.80px;font-family:'Liberation Sans',sans-serif;font-size:12px;line-height:15px;font-weight:bold;font-style:normal;color:#a8a8a8;transform:scaleX(0.9592);">Double stars - show</div>
<div class="t" style="left:897.00px;top:225.00px;font-family:'Liberation Sans',sans-serif;font-size:10px;line-height:12px;font-weight:normal;font-style:normal;color:#a0a0a0;transform:scaleX(0.9146);">Both</div>
<div class="t" style="left:948.70px;top:225.00px;font-family:'Liberation Sans',sans-serif;font-size:10px;line-height:12px;font-weight:normal;font-style:normal;color:#a0a0a0;transform:scaleX(0.9291);">Primary</div>
<div class="t" style="left:1013.90px;top:225.00px;font-family:'Liberation Sans',sans-serif;font-size:10px;line-height:12px;font-weight:normal;font-style:normal;color:#a0a0a0;transform:scaleX(0.9078);">Secondary</div>
<div class="t" style="left:745.70px;top:248.60px;font-family:'Liberation Sans',sans-serif;font-size:12px;line-height:15px;font-weight:bold;font-style:normal;color:#0a6a14;transform:scaleX(0.9887);">Quality of the fit</div>
<div class="t" style="left:849.30px;top:248.20px;font-family:'Liberation Sans',sans-serif;font-size:11.5px;line-height:14px;font-weight:normal;font-style:normal;color:#000;transform:scaleX(0.8965);">Astrometry only. No reliable size</div>
<div class="t" style="left:865.80px;top:270.50px;font-family:'Liberation Sans',sans-serif;font-size:11.5px;line-height:14px;font-weight:normal;font-style:italic;color:#1a1a1a;transform:scaleX(0.9070);">Flag for future review</div>
<div class="t" style="left:745.00px;top:304.50px;font-family:'Liberation Sans',sans-serif;font-size:12px;line-height:15px;font-weight:bold;font-style:normal;color:#6a0a38;">P</div>
<div class="t" style="left:745.00px;top:317.50px;font-family:'Liberation Sans',sans-serif;font-size:12px;line-height:15px;font-weight:bold;font-style:normal;color:#6a0a38;">L</div>
<div class="t" style="left:745.00px;top:330.30px;font-family:'Liberation Sans',sans-serif;font-size:12px;line-height:15px;font-weight:bold;font-style:normal;color:#6a0a38;">O</div>
<div class="t" style="left:745.00px;top:343.60px;font-family:'Liberation Sans',sans-serif;font-size:12px;line-height:15px;font-weight:bold;font-style:normal;color:#6a0a38;">T</div>
<div class="t" style="left:764.70px;top:300.90px;font-family:'Liberation Sans',sans-serif;font-size:12px;line-height:15px;font-weight:bold;font-style:normal;color:#6a0a38;transform:scaleX(0.9784);">Scale</div>
<div class="t" style="left:764.70px;top:326.40px;font-family:'Liberation Sans',sans-serif;font-size:12px;line-height:15px;font-weight:bold;font-style:normal;color:#6a0a38;transform:scaleX(0.9532);">Size</div>
<div class="t" style="left:822.60px;top:328.00px;font-family:'Liberation Sans',sans-serif;font-size:12px;line-height:15px;font-weight:bold;font-style:normal;color:#6a0a38;transform:scaleX(0.9175);">normal</div>
<div class="t" style="left:886.70px;top:328.00px;font-family:'Liberation Sans',sans-serif;font-size:12px;line-height:15px;font-weight:bold;font-style:normal;color:#6a0a38;transform:scaleX(1.0407);">x 2</div>
<div class="t" style="left:930.50px;top:328.00px;font-family:'Liberation Sans',sans-serif;font-size:12px;line-height:15px;font-weight:bold;font-style:normal;color:#6a0a38;transform:scaleX(1.0407);">x 5</div>
<div class="t" style="left:765.70px;top:352.20px;font-family:'Liberation Sans',sans-serif;font-size:12px;line-height:15px;font-weight:bold;font-style:normal;color:#6a0a38;transform:scaleX(0.9976);">Scroll range x1.25</div>
<div class="t" style="left:979.60px;top:328.30px;font-family:'Liberation Sans',sans-serif;font-size:12px;line-height:15px;font-weight:bold;font-style:normal;color:#800080;transform:scaleX(0.9369);">Form opacity</div>
<div class="t" style="left:750.20px;top:382.10px;font-family:'Liberation Sans',sans-serif;font-size:11.5px;line-height:14px;font-weight:normal;font-style:normal;color:#000;transform:scaleX(0.9291);">RMS fit 0.0 ±0.0 km</div>
<div class="b" style="left:744px;top:404px;width:324px;height:320px;overflow:hidden"><div class="t" style="left:94.30px;top:1.50px;font-family:'Liberation Mono',monospace;font-size:11.8px;line-height:15px;font-weight:normal;font-style:normal;color:#000;letter-spacing:1.12px;">1(M) D Gault, near Hawkesbury</div></div>
<div class="b" style="left:744px;top:404px;width:324px;height:320px;overflow:hidden"><div class="t" style="left:94.30px;top:13.60px;font-family:'Liberation Mono',monospace;font-size:11.8px;line-height:15px;font-weight:normal;font-style:normal;color:#000;letter-spacing:1.12px;">2    P Nosworthy, near Hazelbrook</div></div>
<div class="t" style="left:838.30px;top:429.50px;font-family:'Liberation Mono',monospace;font-size:11.8px;line-height:15px;font-weight:normal;font-style:normal;color:#000;letter-spacing:1.12px;">3(P) Predicted</div>
</body></html>
